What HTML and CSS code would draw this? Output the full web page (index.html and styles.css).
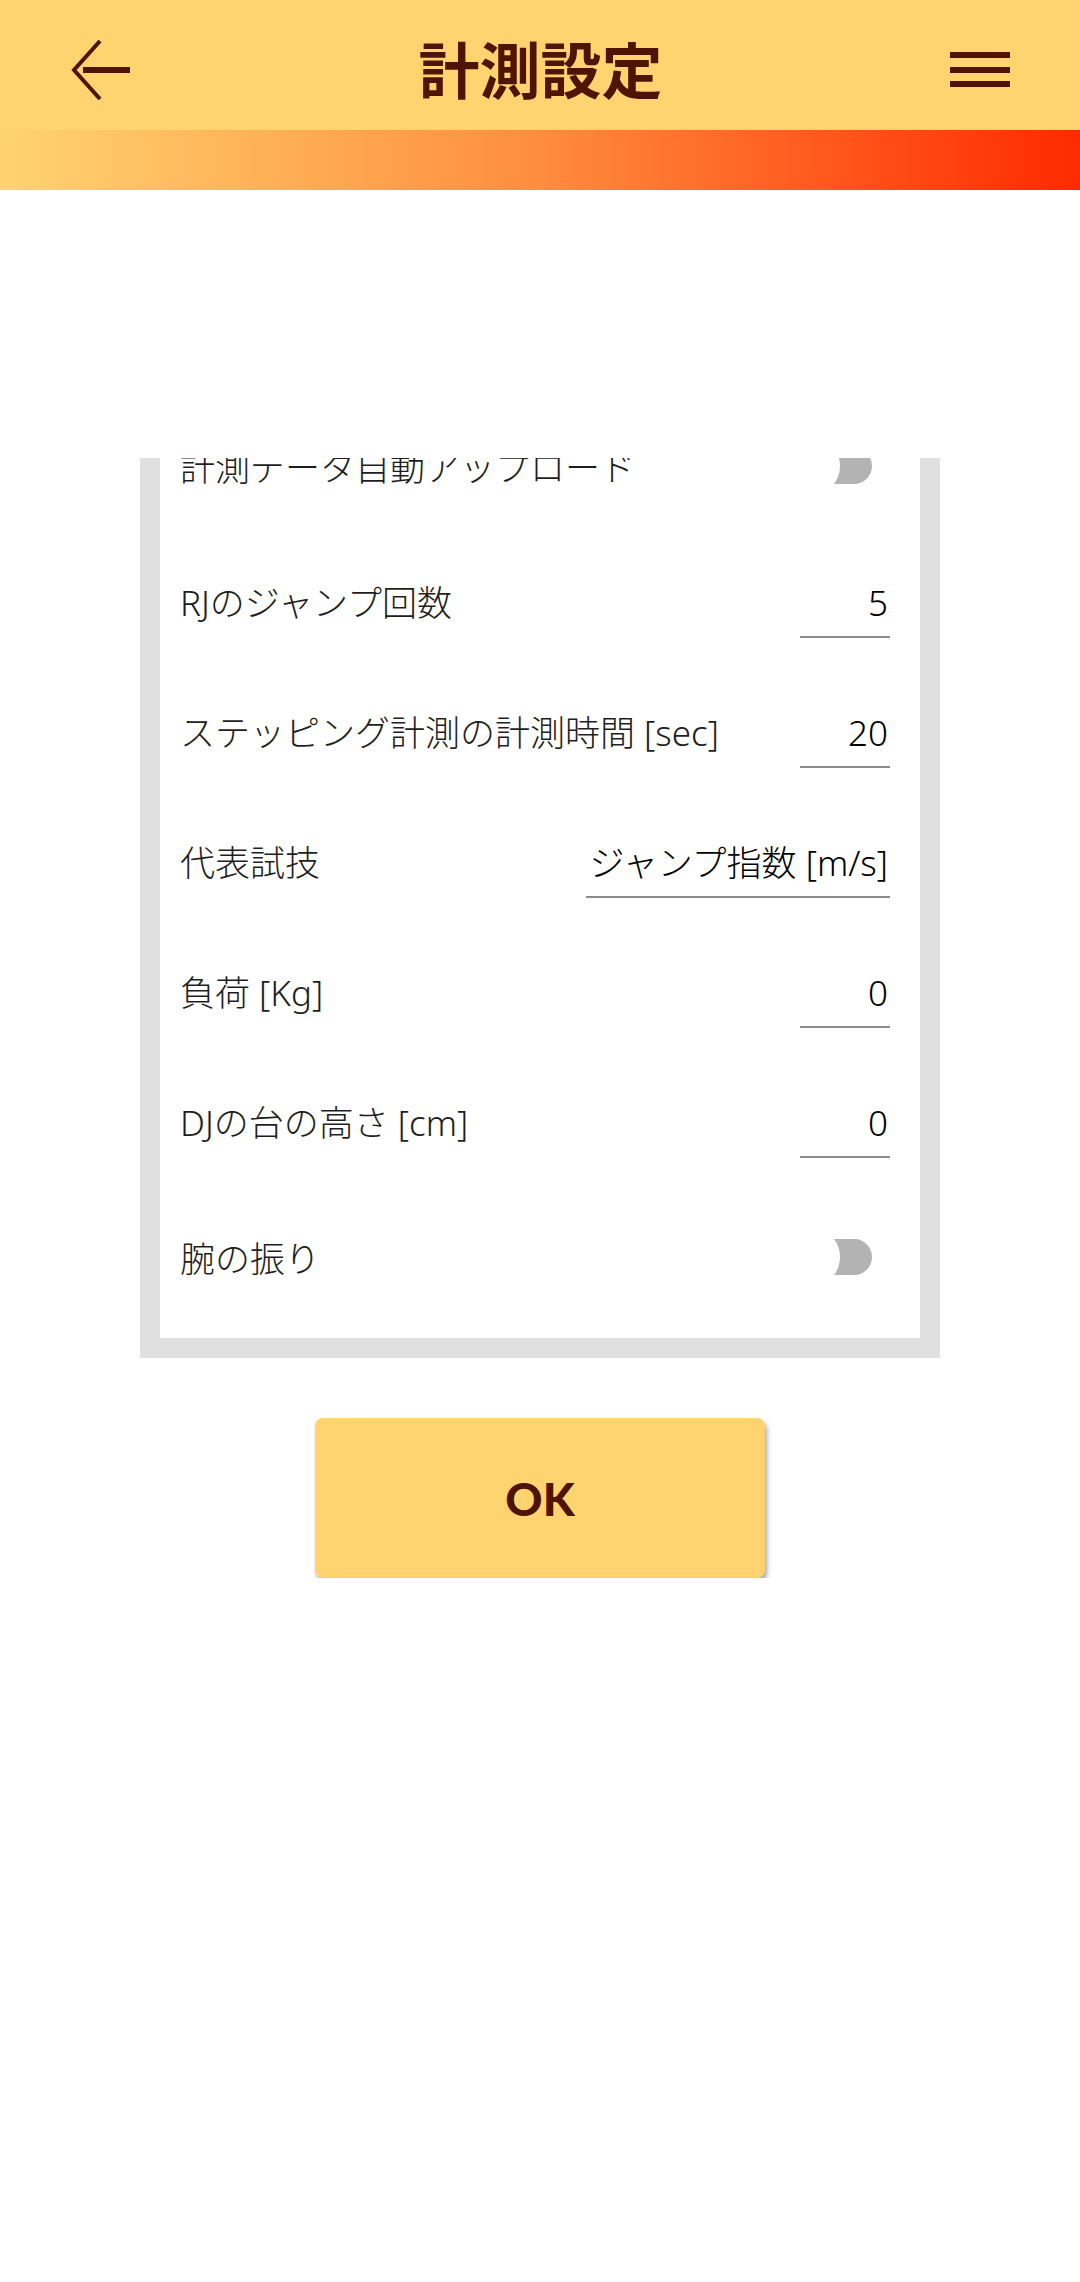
FILE: index.html
```html
<!DOCTYPE html>
<html lang="ja">
<head>
<meta charset="utf-8">
<title>計測設定</title>
<link rel="stylesheet" href="styles.css">
</head>
<body>
<header class="appbar">
  <svg class="icon-back" width="60" height="60" viewBox="0 0 60 60" aria-label="戻る">
    <polyline points="29,1 3,30 29,59" fill="none" stroke="#4f1404" stroke-width="4"/>
    <line x1="12" y1="30" x2="59" y2="30" stroke="#4f1404" stroke-width="6"/>
  </svg>
  <h1 class="title">計測設定</h1>
  <svg class="icon-menu" width="60" height="36" viewBox="0 0 60 36" aria-label="メニュー">
    <rect x="0" y="0" width="60" height="6"/>
    <rect x="0" y="15" width="60" height="6"/>
    <rect x="0" y="29" width="60" height="6"/>
  </svg>
</header>
<div class="accent"></div>
<main class="content">
  <div class="viewport">
    <section class="card">
      <div class="row row-switch">
        <span class="label">計測データ自動アップロード</span>
        <svg class="switch" width="38" height="36" viewBox="0 0 38 36"><path d="M0 0H20A18 18 0 0 1 20 36H0A30 30 0 0 0 0 0Z"/></svg>
      </div>
      <div class="row row-field row-first">
        <span class="label">RJのジャンプ回数</span>
        <span class="field">5</span>
      </div>
      <div class="row row-field">
        <span class="label">ステッピング計測の計測時間 [sec]</span>
        <span class="field">20</span>
      </div>
      <div class="row row-field">
        <span class="label">代表試技</span>
        <span class="field field-wide">ジャンプ指数 [m/s]</span>
      </div>
      <div class="row row-field">
        <span class="label">負荷 [Kg]</span>
        <span class="field">0</span>
      </div>
      <div class="row row-field">
        <span class="label">DJの台の高さ [cm]</span>
        <span class="field">0</span>
      </div>
      <div class="row row-switch row-last">
        <span class="label">腕の振り</span>
        <svg class="switch" width="38" height="36" viewBox="0 0 38 36"><path d="M0 0H20A18 18 0 0 1 20 36H0A30 30 0 0 0 0 0Z"/></svg>
      </div>
    </section>
  </div>
  <div class="actions">
    <button class="ok-button" type="button">OK</button>
  </div>
</main>
</body>
</html>
```
FILE: styles.css
```css
html, body {
  margin: 0;
  padding: 0;
  background: #ffffff;
}

body {
  width: 1080px;
  font-family: "Noto Sans CJK JP", "Noto Sans", sans-serif;
  color: #212121;
}

.appbar {
  height: 130px;
  box-sizing: border-box;
  padding: 10px 70px 0 71px;
  display: flex;
  align-items: center;
  justify-content: space-between;
  background: #ffd470;
}

.icon-back,
.icon-menu {
  display: block;
  flex: none;
}

.icon-menu {
  fill: #4f1404;
}

.title {
  margin: 0 0 6px;
  font-size: 61px;
  line-height: 61px;
  font-weight: 700;
  color: #4f1404;
}

.accent {
  height: 60px;
  background: linear-gradient(90deg, #ffd470 0%, #ff8c3f 50%, #ff2a00 100%);
}

.content {
  padding-top: 268px;
}

.viewport {
  width: 800px;
  margin: 0 auto;
  overflow: hidden;
}

.card {
  margin-top: -90px;
  border: 20px solid #e0e0e0;
  background: #ffffff;
  padding: 60px 30px 63px 20px;
}

.row {
  display: flex;
  justify-content: space-between;
}

.row-switch {
  height: 36px;
  align-items: center;
}

.row-last {
  margin-top: 81px;
}

.row-field {
  height: 130px;
  align-items: flex-end;
}

.row-first {
  margin-top: 24px;
}

.label,
.field {
  font-family: "Noto Sans", "Noto Sans CJK JP", sans-serif;
  font-size: 35px;
  line-height: 50px;
  font-weight: 300;
  white-space: nowrap;
}

.label {
  color: #1e1e1e;
}

.row-switch .label {
  padding-top: 3px;
}

.row-field .label {
  padding-bottom: 10px;
}

.field {
  width: 90px;
  box-sizing: border-box;
  text-align: right;
  padding: 0 2px 8px 0;
  border-bottom: 2px solid #8c8c8c;
  color: #000000;
}

.field-wide {
  width: 304px;
}

.switch {
  display: block;
  margin-right: 18px;
  fill: #b3b3b3;
}

.actions {
  display: flex;
  justify-content: center;
  padding-top: 60px;
}

.ok-button {
  width: 450px;
  height: 160px;
  padding: 0;
  border: none;
  border-radius: 8px;
  background: #ffd470;
  box-shadow: 2px 4px 5px rgba(0, 0, 0, 0.35);
  font-family: "Lato", sans-serif;
  font-weight: 900;
  font-size: 46px;
  color: #4f1404;
}
```
